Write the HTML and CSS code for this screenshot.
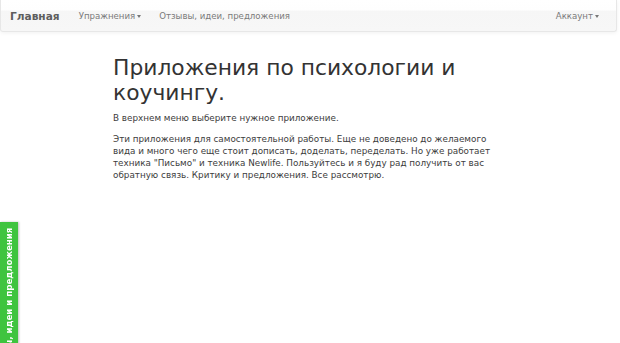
FILE: index.html
```html
<!DOCTYPE html>
<html lang="ru">
<head>
<meta charset="utf-8">
<title>Приложения по психологии и коучингу</title>
<link rel="stylesheet" href="styles.css">
</head>
<body>
<nav class="navbar">
  <div class="nav-left">
    <a class="brand" href="#">Главная</a>
    <a class="nav-link" href="#">Упражнения<span class="caret"></span></a>
    <a class="nav-link" href="#">Отзывы, идеи, предложения</a>
  </div>
  <div class="nav-right">
    <a class="nav-link" href="#">Аккаунт<span class="caret"></span></a>
  </div>
</nav>
<main class="content">
  <h1 class="title">Приложения по психологии и коучингу.</h1>
  <p class="text">В верхнем меню выберите нужное приложение.</p>
  <p class="text">Эти приложения для самостоятельной работы. Еще не доведено до желаемого вида и много чего еще стоит дописать, доделать, переделать. Но уже работает техника "Письмо" и техника Newlife. Пользуйтесь и я буду рад получить от вас обратную связь. Критику и предложения. Все рассмотрю.</p>
</main>
<div class="feedback-tab">Отзывы, идеи и предложения</div>
</body>
</html>
```

FILE: styles.css
```css
html, body {
  margin: 0;
  padding: 0;
  background: #fff;
  font-family: "DejaVu Sans", Verdana, sans-serif;
  color: #333;
}

.navbar {
  display: flex;
  justify-content: space-between;
  align-items: center;
  height: 32px;
  width: 617px;
  box-sizing: border-box;
  border: 1px solid #e7e7e7;
  border-top: none;
  border-radius: 0 0 3px 3px;
  background: linear-gradient(to bottom, #ffffff 0%, #fefefe 32%, #f6f6f6 36%, #f7f7f7 100%);
  box-shadow: 0 1px 4px rgba(0, 0, 0, 0.06);
}

.nav-left, .nav-right {
  display: flex;
  align-items: center;
}

.nav-left {
  padding-left: 9px;
}

.nav-right {
  padding-right: 17px;
}

.brand {
  font-size: 10.6px;
  font-weight: bold;
  color: #5e5e5e;
  text-decoration: none;
  margin-right: 19px;
}

.nav-link {
  font-size: 8.6px;
  color: #7a7a7a;
  text-decoration: none;
  margin-right: 18px;
}

.nav-right .nav-link {
  margin-right: 0;
}

.caret {
  display: inline-block;
  width: 0;
  height: 0;
  margin-left: 2px;
  vertical-align: middle;
  border-top: 3px solid #777;
  border-left: 2.5px solid transparent;
  border-right: 2.5px solid transparent;
}

.content {
  margin-left: 113px;
  width: 392px;
  padding-top: 23px;
}

.title {
  margin: 0 0 7px 0;
  font-size: 21.8px;
  font-weight: normal;
  line-height: 25px;
  color: #333;
}

.text {
  margin: 0 0 9px 0;
  font-size: 8.8px;
  line-height: 12px;
  color: #3c3c3c;
}

.feedback-tab {
  position: fixed;
  left: 0;
  top: 222px;
  height: 190px;
  width: 18px;
  box-sizing: border-box;
  writing-mode: vertical-rl;
  transform: rotate(180deg);
  text-align: end;
  padding: 6px 0;
  line-height: 18px;
  background: #3fc43f;
  color: #fff;
  font-size: 8.6px;
  font-weight: bold;
  white-space: nowrap;
  box-shadow: -1px 0 2px rgba(0, 0, 0, 0.25);
}
```
